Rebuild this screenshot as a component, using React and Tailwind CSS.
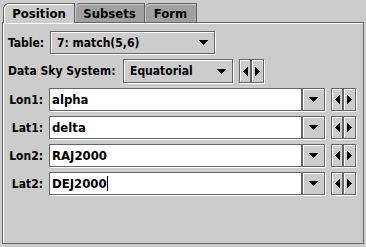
import React from 'react';

const etched = 'border border-[#666666] shadow-[1px_1px_0_#ffffff,inset_1px_1px_0_#ffffff]';

const DownArrow = () => (
  <svg width="9" height="5" viewBox="0 0 9 5" shapeRendering="crispEdges">
    <polygon points="0,0 9,0 4.5,5" fill="#000" />
  </svg>
);

const ArrowPair = () => (
  <div className="flex h-full">
    <div className={`w-[12px] h-full bg-[#cccccc] flex items-center justify-center ${etched}`}>
      <svg width="5" height="9" viewBox="0 0 5 9" shapeRendering="crispEdges">
        <polygon points="5,0 5,9 0,4.5" fill="#000" />
      </svg>
    </div>
    <div className={`w-[13px] h-full bg-[#cccccc] flex items-center justify-center ${etched}`}>
      <svg width="5" height="9" viewBox="0 0 5 9" shapeRendering="crispEdges">
        <polygon points="0,0 0,9 5,4.5" fill="#000" />
      </svg>
    </div>
  </div>
);

const Combo = ({ value, width }) => (
  <div className={`${width} h-full bg-[#cccccc] flex items-center pl-[6px] pr-[6px] ${etched}`}>
    <span className="flex-1">{value}</span>
    <DownArrow />
  </div>
);

const CoordRow = ({ label, value, cursor }) => (
  <div className="flex items-center h-[23px] mt-[5px]">
    <span className="w-[35px] text-right">{label}</span>
    <div className="ml-[6px] w-[253px] h-full bg-white border border-[#666666] shadow-[1px_1px_0_#ffffff] flex items-center pl-[2px] text-[13px]">
      <span>{value}</span>
      {cursor && <span className="inline-block w-[1px] h-[15px] bg-black" />}
    </div>
    <div className={`w-[23px] h-full bg-[#cccccc] flex items-center justify-center ${etched}`}>
      <DownArrow />
    </div>
    <div className="ml-[6px] h-full">
      <ArrowPair />
    </div>
  </div>
);

export default function App() {
  return (
    <div
      className="w-[366px] h-[247px] bg-[#cccccc] pt-[3px] px-[2px] text-[12px] font-bold text-black leading-none overflow-hidden"
      style={{ fontFamily: '"DejaVu Sans Condensed", "DejaVu Sans", sans-serif' }}
    >
      <div className="flex items-start h-[19px] pl-[1px] relative z-10">
        <div className="w-[72px] h-[20px] bg-[#cccccc] border-l border-t border-r border-[#666666] rounded-tl-[6px] shadow-[inset_1px_1px_0_#ffffff] flex items-center justify-center text-[13px]">
          Position
        </div>
        <div className="w-[70px] h-[19px] bg-[#a0a0a0] border-t border-r border-[#666666] rounded-tl-[5px] shadow-[inset_1px_1px_0_#c8c8c8] flex items-center justify-center text-[13px]">
          Subsets
        </div>
        <div className="w-[52px] h-[19px] bg-[#a0a0a0] border-t border-r border-[#666666] rounded-tl-[5px] shadow-[inset_1px_1px_0_#c8c8c8] flex items-center justify-center text-[13px]">
          Form
        </div>
      </div>
      <div className="h-[222px] border border-[#666666] shadow-[inset_1px_1px_0_#ffffff] pt-[8px] pl-[5px]">
        <div className="flex items-center h-[23px]">
          <span className="w-[42px]">Table:</span>
          <Combo value="7: match(5,6)" width="w-[165px]" />
        </div>
        <div className="flex items-center h-[24px] mt-[5px]">
          <span className="w-[115px]">Data Sky System:</span>
          <Combo value="Equatorial" width="w-[110px]" />
          <div className="ml-[6px] h-full">
            <ArrowPair />
          </div>
        </div>
        <CoordRow label="Lon1:" value="alpha" />
        <CoordRow label="Lat1:" value="delta" />
        <CoordRow label="Lon2:" value="RAJ2000" />
        <CoordRow label="Lat2:" value="DEJ2000" cursor />
      </div>
    </div>
  );
}
